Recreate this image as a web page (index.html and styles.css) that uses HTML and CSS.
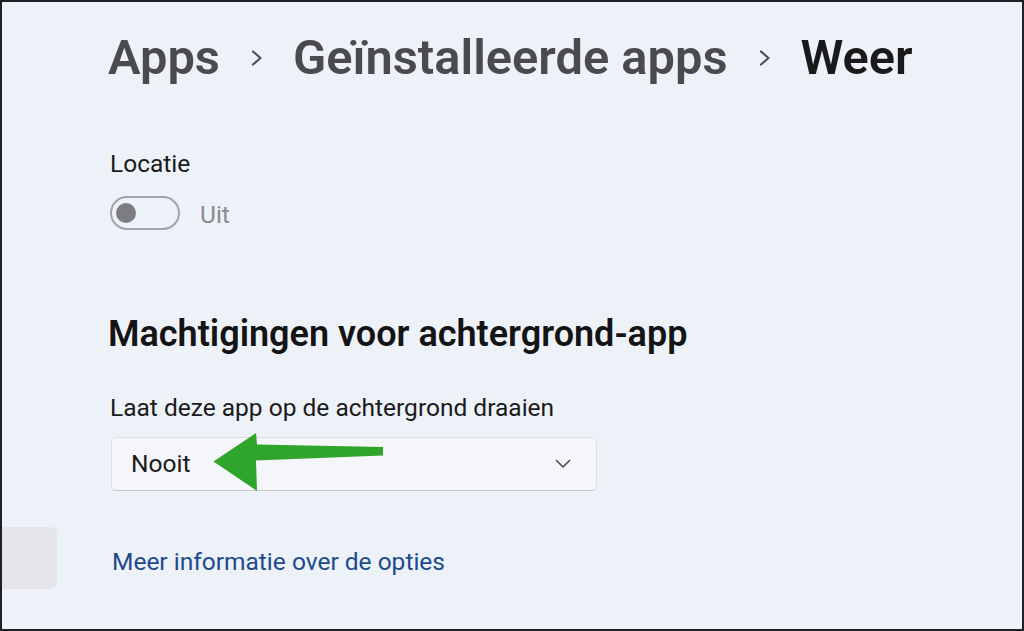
FILE: index.html
```html
<!DOCTYPE html>
<html lang="nl">
<head>
    <meta charset="UTF-8">
    <meta name="viewport" content="width=device-width, initial-scale=1.0">
    <title>Weer - Geïnstalleerde apps</title>
    <link rel="stylesheet" href="styles.css">
</head>
<body>
    <div class="window">
        <main class="page">
            <nav class="crumbs">
                <span class="crumb">Apps</span>
                <svg class="crumb-sep" viewBox="0 0 12 16" width="12" height="16"><polyline points="2,1.5 9.5,8 2,14.5"/></svg>
                <span class="crumb">Geïnstalleerde apps</span>
                <svg class="crumb-sep" viewBox="0 0 12 16" width="12" height="16"><polyline points="2,1.5 9.5,8 2,14.5"/></svg>
                <span class="crumb current">Weer</span>
            </nav>

            <section class="setting">
                <div class="label">Locatie</div>
                <div class="toggle-row">
                    <span class="toggle"><span class="knob"></span></span>
                    <span class="toggle-text">Uit</span>
                </div>
            </section>

            <h2 class="section-title">Machtigingen voor achtergrond-app</h2>
            <div class="label label-run">Laat deze app op de achtergrond draaien</div>
            <div class="select">
                <span class="select-value">Nooit</span>
                <svg class="select-chevron" viewBox="0 0 16 10" width="16" height="10"><polyline points="1.5,1.5 8,8 14.5,1.5"/></svg>
                <!-- groene pijl uit de screenshot -->
                <svg class="pointer" viewBox="0 0 272 60" width="272" height="60"><polygon points="101.5,28.5 144,0 145,11.5 271,14 271,22.5 144,27.5 145,58"/></svg>
            </div>

            <a class="more-link" href="#">Meer informatie over de opties</a>
        </main>
        <div class="nav-tab"></div>
    </div>
</body>
</html>
```
FILE: styles.css
```css
*{
    margin: 0;
    padding: 0;
    box-sizing: border-box;
}
body{
    font-family: Roboto, "Noto Sans", sans-serif;
    color: #1b1b1b;
    background: #1f1f25;
}
.window{
    position: relative;
    height: 631px;
    border: 2px solid #1f1f25;
    background: #edf1f8;
    overflow: hidden;
}
.page{
    display: flex;
    flex-direction: column;
    align-items: flex-start;
    padding: 26px 0 0 106px;
}

/* breadcrumb */
.crumbs{
    display: flex;
    align-items: center;
    height: 60px;
    font-size: 48.8px;
    font-weight: 600;
    line-height: 60px;
    color: #4a4a4f;
}
.crumb.current{
    color: #1a1a1a;
}
.crumb-sep{
    margin: 0 30px 0 31px;
    fill: none;
    stroke: #4d4d52;
    stroke-width: 2.2;
    stroke-linecap: round;
    stroke-linejoin: round;
}

.label{
    font-size: 24.5px;
    line-height: 32px;
    color: #1b1b1b;
}
.setting{
    margin-top: 60px;
    padding-left: 2px;
}
.toggle-row{
    display: flex;
    align-items: flex-start;
    height: 34px;
    margin-top: 16px;
}
.toggle{
    display: flex;
    align-items: center;
    width: 70px;
    height: 34px;
    padding-left: 4px;
    border: 2px solid #a3a3a9;
    border-radius: 17px;
}
.knob{
    width: 20px;
    height: 20px;
    border-radius: 50%;
    background: #7c7c82;
}
.toggle-text{
    margin: 3px 0 0 20px;
    font-size: 24.5px;
    line-height: 32px;
    color: #8a8a90;
}

.section-title{
    margin-top: 82px;
    font-size: 36px;
    font-weight: 600;
    line-height: 44px;
    color: #141414;
}
.label-run{
    margin-top: 36px;
    padding-left: 2px;
}

/* keuzelijst */
.select{
    position: relative;
    display: flex;
    align-items: center;
    justify-content: space-between;
    width: 486px;
    height: 54px;
    margin: 13px 0 0 3px;
    padding: 0 25px 0 19px;
    background: #f5f6fa;
    border: 1px solid #dedfe5;
    border-bottom-color: #c8c9cf;
    border-radius: 5px;
}
.select-value{
    font-size: 24.5px;
    line-height: 32px;
    color: #1b1b1b;
}
.select-chevron{
    fill: none;
    stroke: #505055;
    stroke-width: 1.7;
    stroke-linecap: round;
    stroke-linejoin: round;
}
.pointer{
    position: absolute;
    left: 0;
    top: -5px;
    fill: #2fa52b;
}

.more-link{
    margin: 55px 0 0 4px;
    font-size: 24.5px;
    line-height: 32px;
    color: #1d4b8c;
    text-decoration: none;
}

/* stukje van het navigatiepaneel links */
.nav-tab{
    position: absolute;
    left: -8px;
    top: 525px;
    width: 63px;
    height: 62px;
    border-radius: 7px;
    background: #e5e5eb;
}
```
